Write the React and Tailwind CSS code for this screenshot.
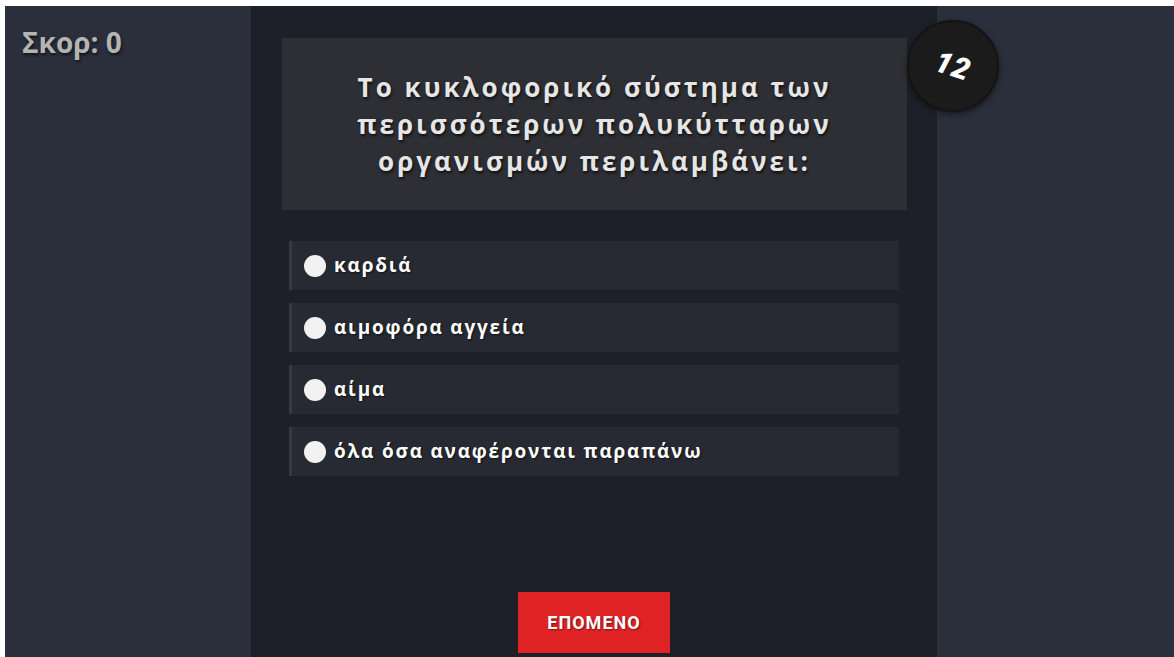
import { useState } from "react";

const question =
  "Το κυκλοφορικό σύστημα των περισσότερων πολυκύτταρων οργανισμών περιλαμβάνει:";

const answers = [
  "καρδιά",
  "αιμοφόρα αγγεία",
  "αίμα",
  "όλα όσα αναφέρονται παραπάνω",
];

// round countdown badge
const Timer = ({ seconds }) => (
  <div className="absolute left-[656px] top-[14px] flex h-[92px] w-[92px] items-center justify-center rounded-full border-2 border-[#141414] bg-[#1b1b1b] shadow-[0_2px_6px_rgba(0,0,0,0.5)]">
    <span className="block rotate-[18deg] text-[30px] font-black italic leading-none tracking-[1px] text-white">
      {seconds}
    </span>
  </div>
);

const Answer = ({ label, checked, onPick }) => (
  <button
    onClick={onPick}
    className="flex h-[49px] w-full items-center gap-[8px] border-l-[3px] border-[#363942] bg-[#272a32] pl-[12px] text-left"
  >
    <span
      className={
        checked
          ? "h-[22px] w-[22px] rounded-full border-[6px] border-white bg-[#e02424]"
          : "h-[22px] w-[22px] rounded-full bg-[#f2f2f2]"
      }
    />
    <span className="font-['Open_Sans',sans-serif] text-[19px] font-bold tracking-[1.8px] text-white [text-shadow:1px_1px_2px_rgba(0,0,0,0.6)]">
      {label}
    </span>
  </button>
);

export default function App() {
  const [picked, setPicked] = useState(null);

  return (
    <div className="h-[657px] w-full overflow-hidden bg-white pl-[5px] pt-[6px] font-['Roboto','Noto_Sans',sans-serif]">
      <div className="flex h-full bg-[#2a2f3b]">
        {/* score */}
        <div className="w-[246px] shrink-0 pl-[17px] pt-[22px]">
          <p className="font-['Open_Sans',sans-serif] text-[28px] font-bold leading-none text-[#b4b4b4] [text-shadow:1px_2px_3px_rgba(0,0,0,0.6)]">
            Σκορ: 0
          </p>
        </div>

        {/* quiz column */}
        <div className="relative flex w-[686px] shrink-0 flex-col bg-[#1e2029] pt-[32px]">
          <div className="ml-[31px] mr-[30px] flex h-[172px] items-center justify-center bg-[#2e2f34] px-[40px]">
            <h1 className="text-center font-['Open_Sans',sans-serif] text-[26px] font-bold leading-[37px] tracking-[3px] text-[#e6e6e6] [text-shadow:1px_2px_3px_rgba(0,0,0,0.7)]">
              {question}
            </h1>
          </div>

          <Timer seconds={12} />

          <div className="mx-[38px] mt-[31px] flex flex-col gap-[13px]">
            {answers.map((a, i) => (
              <Answer
                key={a}
                label={a}
                checked={picked === i}
                onPick={() => setPicked(i)}
              />
            ))}
          </div>

          <div className="mb-[4px] mt-auto flex justify-center">
            <button className="h-[61px] w-[152px] bg-[#e02426] text-[18px] font-bold tracking-[1px] text-white [text-shadow:1px_1px_2px_rgba(0,0,0,0.5)]">
              ΕΠΟΜΕΝΟ
            </button>
          </div>
        </div>

        <div className="flex-1" />
      </div>
    </div>
  );
}
